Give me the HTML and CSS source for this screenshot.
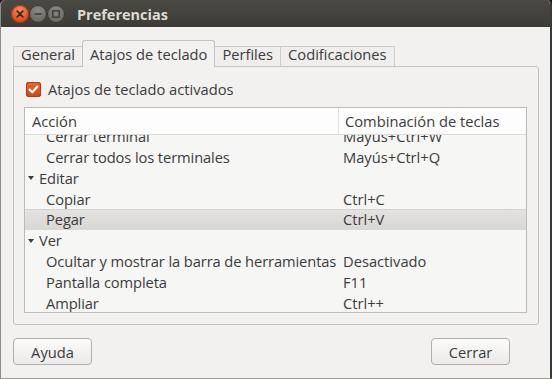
FILE: index.html
```html
<!DOCTYPE html>
<html lang="es">
<head>
    <meta charset="UTF-8">
    <title>Preferencias</title>
    <link rel="stylesheet" href="styles.css">
</head>
<body>
    <div class="window">
        <div class="titlebar">
            <div class="controls">
                <span class="wbtn close">
                    <svg width="18" height="18" viewBox="0 0 18 18"><path d="M6.2 6.2 L11.8 11.8 M11.8 6.2 L6.2 11.8" stroke="#3b2a22" stroke-width="1.8" stroke-linecap="round"/></svg>
                </span>
                <span class="wbtn">
                    <svg width="18" height="18" viewBox="0 0 18 18"><path d="M5.5 9 H12.5" stroke="#3c3b37" stroke-width="1.6"/></svg>
                </span>
                <span class="wbtn">
                    <svg width="18" height="18" viewBox="0 0 18 18"><rect x="5.8" y="5.8" width="6.4" height="6.4" fill="none" stroke="#3c3b37" stroke-width="1.4"/></svg>
                </span>
            </div>
            <span class="title">Preferencias</span>
        </div>

        <div class="content">
            <div class="tabs">
                <div class="tab">General</div>
                <div class="tab active">Atajos de teclado</div>
                <div class="tab">Perfiles</div>
                <div class="tab">Codificaciones</div>
            </div>

            <div class="panel">
                <label class="check">
                    <span class="box">
                        <svg width="15" height="15" viewBox="0 0 15 15"><path d="M3.6 7.6 L6.3 10.3 L11.4 4.6" fill="none" stroke="#fff" stroke-width="2.2" stroke-linecap="round" stroke-linejoin="round"/></svg>
                    </span>
                    Atajos de teclado activados
                </label>

                <div class="tree">
                    <div class="tree-head">
                        <div class="head-col">Acción</div>
                        <div class="head-col">Combinación de teclas</div>
                    </div>
                    <div class="tree-body">
                        <div class="rows">
                            <div class="row"><span class="name">Cerrar terminal</span><span class="key">Mayús+Ctrl+W</span></div>
                            <div class="row"><span class="name">Cerrar todos los terminales</span><span class="key">Mayús+Ctrl+Q</span></div>
                            <div class="row group"><span class="name"><span class="arrow"></span>Editar</span><span class="key"></span></div>
                            <div class="row"><span class="name">Copiar</span><span class="key">Ctrl+C</span></div>
                            <div class="row hover"><span class="name">Pegar</span><span class="key">Ctrl+V</span></div>
                            <div class="row group"><span class="name"><span class="arrow"></span>Ver</span><span class="key"></span></div>
                            <div class="row"><span class="name">Ocultar y mostrar la barra de herramientas</span><span class="key">Desactivado</span></div>
                            <div class="row"><span class="name">Pantalla completa</span><span class="key">F11</span></div>
                            <div class="row"><span class="name">Ampliar</span><span class="key">Ctrl++</span></div>
                        </div>
                    </div>
                </div>
            </div>

            <div class="actions">
                <button class="btn">Ayuda</button>
                <button class="btn">Cerrar</button>
            </div>
        </div>
    </div>
</body>
</html>
```

FILE: styles.css
```css
html, body {
    margin: 0;
    background-color: #2c0a22;
}
body {
    width: 552px;
    height: 379px;
    overflow: hidden;
    font-family: 'Open Sans', 'Noto Sans', sans-serif;
    font-size: 14.7px;
    color: #3c3c3c;
}
.window {
    width: 549px;
    height: 378px;
    background-color: #f2f1f0;
    border-left: 1px solid #8e8c88;
    border-right: 2px solid #3a3935;
    border-bottom: 1px solid #9a9894;
    border-radius: 5px 5px 0 0;
    overflow: hidden;
}
.titlebar {
    height: 27px;
    display: flex;
    align-items: center;
    background: linear-gradient(#4a4944, #3c3b37);
}
.controls {
    display: flex;
    margin-left: 10px;
    margin-top: 1px;
}
.wbtn {
    width: 18px;
    height: 18px;
    border-radius: 50%;
    background: radial-gradient(circle at 50% 30%, #8b8a85, #5d5c57);
    box-shadow: inset 0 0 0 1px #34332f;
}
.wbtn svg {
    display: block;
}
.wbtn.close {
    background: radial-gradient(circle at 50% 30%, #f98c5f, #dd4814 75%);
    box-shadow: inset 0 0 0 1px #9a3712;
}
.title {
    margin-left: 12px;
    margin-top: 1px;
    font-weight: 700;
    font-size: 14.5px;
    color: #dfdbd2;
}
.content {
    padding: 13px 11px 0 12px;
}
.tabs {
    display: flex;
    align-items: flex-end;
    height: 26px;
}
.tab {
    height: 15px;
    line-height: 15px;
    padding: 0 7px 4px;
    border: 1px solid #cdcbc7;
    border-bottom: none;
    border-left: none;
    background-color: #efeeed;
}
.tab:first-child {
    border-left: 1px solid #cdcbc7;
}
.tab.active {
    height: 15px;
    padding: 6px 7px 5px;
    margin-bottom: -1px;
    margin-left: -1px;
    border-left: 1px solid #c5c3bf;
    border-color: #c5c3bf;
    border-radius: 3px 3px 0 0;
    background-color: #f2f1f0;
    position: relative;
}
.panel {
    border: 1px solid #c5c3bf;
    border-radius: 0 3px 3px 3px;
    padding: 14px 11px 11px 10px;
}
.check {
    display: flex;
    align-items: center;
    gap: 7px;
    height: 16px;
    margin-left: 2px;
}
.box {
    width: 15px;
    height: 15px;
    border-radius: 3px;
    background: linear-gradient(#e8672f, #cf4511);
    box-shadow: inset 0 0 0 1px #b23c0e;
}
.box svg {
    display: block;
}
.tree {
    margin-top: 10px;
    border: 1px solid #bdbbb7;
    background-color: #f6f6f5;
}
.tree-head {
    display: grid;
    grid-template-columns: 313px 1fr;
    height: 26px;
    line-height: 26px;
    background-color: #fdfdfd;
    border-bottom: 1px solid #dddbd8;
}
.head-col {
    padding-left: 7px;
}
.head-col + .head-col {
    border-left: 1px solid #e2e0dd;
    padding-left: 6px;
}
.tree-body {
    height: 177px;
    overflow: hidden;
}
.rows {
    margin-top: -8.8px;
}
.row {
    display: grid;
    grid-template-columns: 314px 1fr;
    height: 20.8px;
    line-height: 20.8px;
    white-space: nowrap;
}
.row .name {
    padding-left: 21px;
    letter-spacing: -0.1px;
}
.row .key {
    padding-left: 4px;
}
.row.group .name {
    padding-left: 2px;
    display: flex;
    align-items: center;
}
.arrow {
    width: 0;
    height: 0;
    border-left: 3.5px solid transparent;
    border-right: 3.5px solid transparent;
    border-top: 4px solid #3c3c3c;
    margin: 0 5px 0 1px;
}
.row.hover {
    background: linear-gradient(#e4e3e1, #d8d7d4);
    box-shadow: inset 0 1px 0 #d3d2cf;
}
.actions {
    display: flex;
    justify-content: space-between;
    margin: 13px 29px 0 0;
}
.btn {
    width: 79px;
    height: 27px;
    font-family: inherit;
    font-size: 14.7px;
    color: #3c3c3c;
    border: 1px solid #b1afab;
    border-radius: 4px;
    background: linear-gradient(#fbfbfa, #eceae8);
    padding: 0;
}
```
